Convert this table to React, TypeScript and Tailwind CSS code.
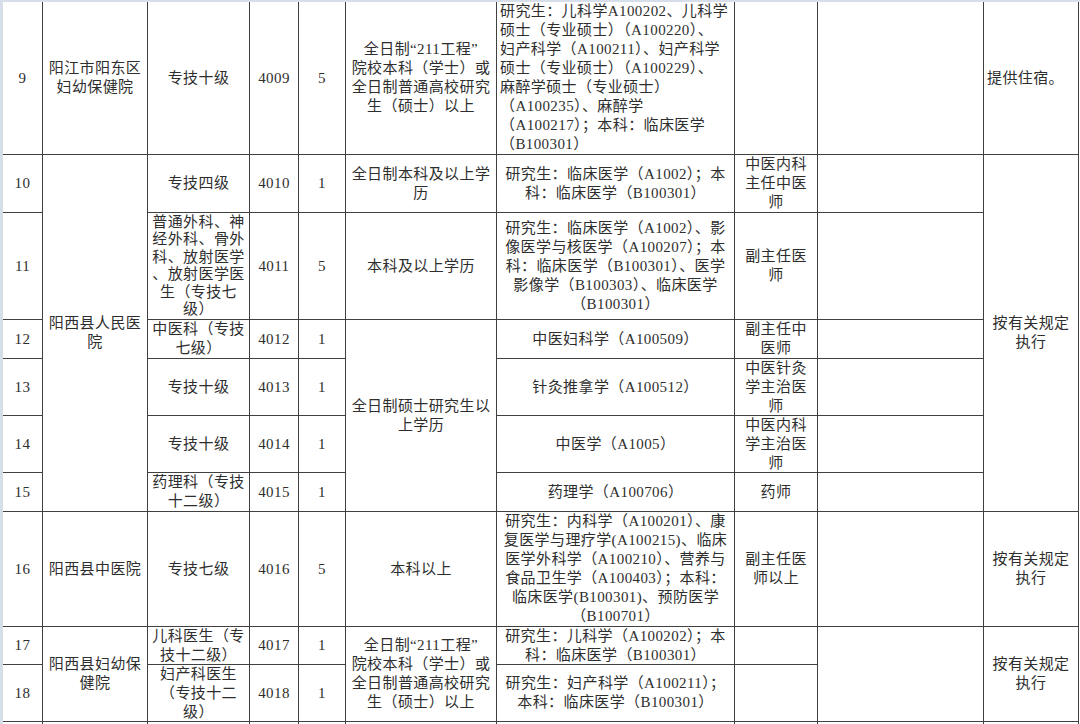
type CellData = {
  pos: string;
  lines?: string[];
  left?: boolean;
  tight?: boolean;
};

const cells: CellData[] = [
  // 9
  { pos: "col-start-1 row-start-1", lines: ["9"] },
  { pos: "col-start-2 row-start-1", lines: ["阳江市阳东区", "妇幼保健院"] },
  { pos: "col-start-3 row-start-1", lines: ["专技十级"] },
  { pos: "col-start-4 row-start-1", lines: ["4009"] },
  { pos: "col-start-5 row-start-1", lines: ["5"] },
  {
    pos: "col-start-6 row-start-1",
    lines: ["全日制“211工程”", "院校本科（学士）或", "全日制普通高校研究", "生（硕士）以上"],
  },
  {
    pos: "col-start-7 row-start-1",
    left: true,
    lines: [
      "研究生：儿科学A100202、儿科学",
      "硕士（专业硕士）（A100220）、",
      "妇产科学（A100211）、妇产科学",
      "硕士（专业硕士）（A100229）、",
      "麻醉学硕士（专业硕士）",
      "（A100235）、麻醉学",
      "（A100217）；本科：临床医学",
      "（B100301）",
    ],
  },
  { pos: "col-start-8 row-start-1" },
  { pos: "col-start-9 row-start-1" },
  { pos: "col-start-10 row-start-1", left: true, lines: ["提供住宿。"] },

  // 10 - 15 阳西县人民医院
  { pos: "col-start-1 row-start-2", lines: ["10"] },
  { pos: "col-start-2 row-start-2 row-span-6", lines: ["阳西县人民医", "院"] },
  { pos: "col-start-3 row-start-2", lines: ["专技四级"] },
  { pos: "col-start-4 row-start-2", lines: ["4010"] },
  { pos: "col-start-5 row-start-2", lines: ["1"] },
  { pos: "col-start-6 row-start-2", lines: ["全日制本科及以上学", "历"] },
  {
    pos: "col-start-7 row-start-2",
    lines: ["研究生：临床医学（A1002）；本", "科：临床医学（B100301）"],
  },
  { pos: "col-start-8 row-start-2", lines: ["中医内科", "主任中医", "师"] },
  { pos: "col-start-9 row-start-2" },
  { pos: "col-start-10 row-start-2 row-span-6", lines: ["按有关规定", "执行"] },

  { pos: "col-start-1 row-start-3", lines: ["11"] },
  {
    pos: "col-start-3 row-start-3",
    tight: true,
    lines: ["普通外科、神", "经外科、骨外", "科、放射医学", "、放射医学医", "生（专技七", "级）"],
  },
  { pos: "col-start-4 row-start-3", lines: ["4011"] },
  { pos: "col-start-5 row-start-3", lines: ["5"] },
  { pos: "col-start-6 row-start-3", lines: ["本科及以上学历"] },
  {
    pos: "col-start-7 row-start-3",
    lines: [
      "研究生：临床医学（A1002）、影",
      "像医学与核医学（A100207）；本",
      "科：临床医学（B100301）、医学",
      "影像学（B100303）、临床医学",
      "（B100301）",
    ],
  },
  { pos: "col-start-8 row-start-3", lines: ["副主任医", "师"] },
  { pos: "col-start-9 row-start-3" },

  { pos: "col-start-1 row-start-4", lines: ["12"] },
  { pos: "col-start-3 row-start-4", lines: ["中医科（专技", "七级）"] },
  { pos: "col-start-4 row-start-4", lines: ["4012"] },
  { pos: "col-start-5 row-start-4", lines: ["1"] },
  { pos: "col-start-6 row-start-4 row-span-4", lines: ["全日制硕士研究生以", "上学历"] },
  { pos: "col-start-7 row-start-4", lines: ["中医妇科学（A100509）"] },
  { pos: "col-start-8 row-start-4", lines: ["副主任中", "医师"] },
  { pos: "col-start-9 row-start-4" },

  { pos: "col-start-1 row-start-5", lines: ["13"] },
  { pos: "col-start-3 row-start-5", lines: ["专技十级"] },
  { pos: "col-start-4 row-start-5", lines: ["4013"] },
  { pos: "col-start-5 row-start-5", lines: ["1"] },
  { pos: "col-start-7 row-start-5", lines: ["针灸推拿学（A100512）"] },
  { pos: "col-start-8 row-start-5", lines: ["中医针灸", "学主治医", "师"] },
  { pos: "col-start-9 row-start-5" },

  { pos: "col-start-1 row-start-6", lines: ["14"] },
  { pos: "col-start-3 row-start-6", lines: ["专技十级"] },
  { pos: "col-start-4 row-start-6", lines: ["4014"] },
  { pos: "col-start-5 row-start-6", lines: ["1"] },
  { pos: "col-start-7 row-start-6", lines: ["中医学（A1005）"] },
  { pos: "col-start-8 row-start-6", lines: ["中医内科", "学主治医", "师"] },
  { pos: "col-start-9 row-start-6" },

  { pos: "col-start-1 row-start-7", lines: ["15"] },
  { pos: "col-start-3 row-start-7", lines: ["药理科（专技", "十二级）"] },
  { pos: "col-start-4 row-start-7", lines: ["4015"] },
  { pos: "col-start-5 row-start-7", lines: ["1"] },
  { pos: "col-start-7 row-start-7", lines: ["药理学（A100706）"] },
  { pos: "col-start-8 row-start-7", lines: ["药师"] },
  { pos: "col-start-9 row-start-7" },

  // 16 阳西县中医院
  { pos: "col-start-1 row-start-8", lines: ["16"] },
  { pos: "col-start-2 row-start-8", lines: ["阳西县中医院"] },
  { pos: "col-start-3 row-start-8", lines: ["专技七级"] },
  { pos: "col-start-4 row-start-8", lines: ["4016"] },
  { pos: "col-start-5 row-start-8", lines: ["5"] },
  { pos: "col-start-6 row-start-8", lines: ["本科以上"] },
  {
    pos: "col-start-7 row-start-8",
    lines: [
      "研究生：内科学（A100201）、康",
      "复医学与理疗学(A100215)、临床",
      "医学外科学（A100210）、营养与",
      "食品卫生学（A100403）；本科：",
      "临床医学(B100301)、预防医学",
      "（B100701）",
    ],
  },
  { pos: "col-start-8 row-start-8", lines: ["副主任医", "师以上"] },
  { pos: "col-start-9 row-start-8" },
  { pos: "col-start-10 row-start-8", lines: ["按有关规定", "执行"] },

  // 17 - 18 阳西县妇幼保健院
  { pos: "col-start-1 row-start-9", lines: ["17"] },
  { pos: "col-start-2 row-start-9 row-span-2", lines: ["阳西县妇幼保", "健院"] },
  { pos: "col-start-3 row-start-9", lines: ["儿科医生（专", "技十二级）"] },
  { pos: "col-start-4 row-start-9", lines: ["4017"] },
  { pos: "col-start-5 row-start-9", lines: ["1"] },
  {
    pos: "col-start-6 row-start-9 row-span-2",
    lines: ["全日制“211工程”", "院校本科（学士）或", "全日制普通高校研究", "生（硕士）以上"],
  },
  {
    pos: "col-start-7 row-start-9",
    lines: ["研究生：儿科学（A100202）；本", "科：临床医学（B100301）"],
  },
  { pos: "col-start-8 row-start-9" },
  { pos: "col-start-9 row-start-9 row-span-2" },
  { pos: "col-start-10 row-start-9 row-span-2", lines: ["按有关规定", "执行"] },

  { pos: "col-start-1 row-start-10", lines: ["18"] },
  { pos: "col-start-3 row-start-10", lines: ["妇产科医生", "（专技十二", "级）"] },
  { pos: "col-start-4 row-start-10", lines: ["4018"] },
  { pos: "col-start-5 row-start-10", lines: ["1"] },
  {
    pos: "col-start-7 row-start-10",
    lines: ["研究生：妇产科学（A100211）；", "本科：临床医学（B100301）"],
  },
  { pos: "col-start-8 row-start-10" },

  // next row, cut off by the window
  { pos: "col-start-1 row-start-11" },
  { pos: "col-start-2 row-start-11" },
  { pos: "col-start-3 row-start-11" },
  { pos: "col-start-4 row-start-11" },
  { pos: "col-start-5 row-start-11" },
  { pos: "col-start-6 row-start-11" },
  { pos: "col-start-7 row-start-11" },
  { pos: "col-start-8 row-start-11" },
  { pos: "col-start-9 row-start-11" },
  { pos: "col-start-10 row-start-11" },
];

function Cell({ pos, lines, left, tight }: CellData) {
  return (
    <div
      className={`${pos} flex items-center overflow-hidden bg-white ${
        left ? "justify-start pl-[3px] text-left" : "justify-center text-center"
      }`}
    >
      {lines && (
        <div className={`whitespace-nowrap ${tight ? "leading-[17.5px]" : ""}`}>
          {lines.map((line, i) => (
            <div key={i}>{line}</div>
          ))}
        </div>
      )}
    </div>
  );
}

export default function App() {
  return (
    <div className="h-[724px] w-[1080px] overflow-hidden border-l-[3px] border-t-[2px] border-[#d6dfe9] bg-white">
      <div className="grid w-max grid-cols-[39px_104px_101px_48px_46px_150px_237px_82px_165px_94px] grid-rows-[152px_57px_106px_38px_56px_56px_38px_114px_37px_56px_40px] gap-px border-r border-[#404040] bg-[#404040] font-['Liberation_Serif','Noto_Sans_CJK_SC',serif] text-[15px] leading-[19px] tracking-[0.4px] text-[#2e2e2e]">
        {cells.map((c, i) => (
          <Cell key={i} {...c} />
        ))}
      </div>
    </div>
  );
}
